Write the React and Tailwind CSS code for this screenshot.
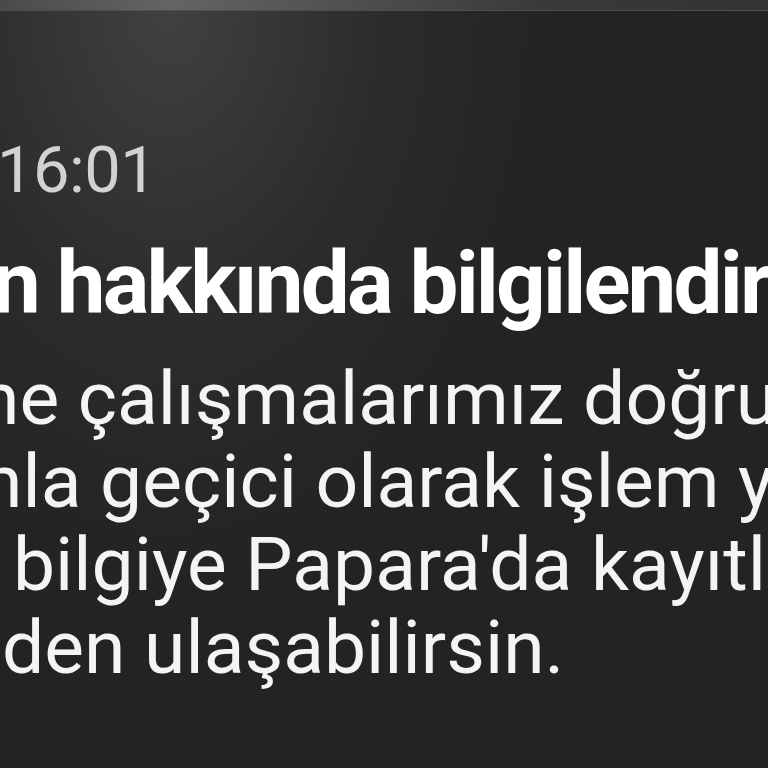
export default function App() {
  return (
    <div className="relative w-[768px] h-[768px] overflow-hidden bg-[radial-gradient(ellipse_60%_90%_at_22%_0%,#414143_0%,#2c2c2e_45%,#232325_85%)] font-['Roboto',sans-serif] text-white">
      <div className="h-[11px] bg-[linear-gradient(to_right,#4a4a4a_0%,#646464_22%,#505050_45%,#3a3a3a_70%,#333335_100%)] border-b border-[#4e4e4e]" />
      <div className="pt-[124px] flex flex-col whitespace-nowrap">
        <div className="-ml-[3px] text-[65px] leading-[70px] text-[#d2d2d2] tracking-[-0.5px]">16:01</div>
        <div className="mt-[28px] -ml-[8px] text-[87px] leading-[100px] font-bold tracking-[-2.8px]">
          n hakkında bilgilendir
        </div>
        <div className="mt-[24px] flex flex-col text-[75px] leading-[83px] text-[#f4f4f4]">
          <div className="-ml-[22px]">ne çalışmalarımız doğru</div>
          <div className="-ml-[19px]">nla geçici olarak işlem y</div>
          <div className="ml-[13px]">bilgiye Papara'da kayıtl</div>
          <div className="ml-[2px]">den ulaşabilirsin.</div>
        </div>
      </div>
    </div>
  );
}
